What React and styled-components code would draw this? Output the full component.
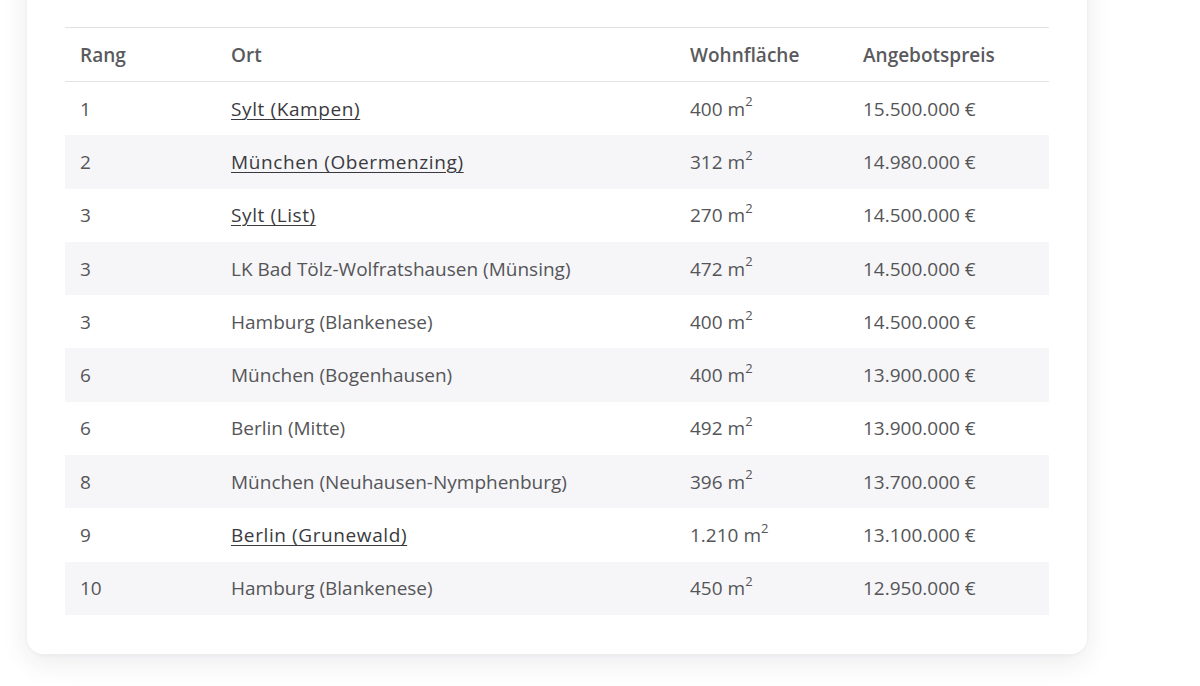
import React from "react";
import styled, { createGlobalStyle } from "styled-components";

const Global = createGlobalStyle`
  html, body { margin: 0; padding: 0; background: #ffffff; }
  body { font-family: "Open Sans", "Liberation Sans", sans-serif; overflow: hidden; }
`;

const Page = styled.div`
  width: 1200px;
  height: 686px;
  overflow: hidden;
  background: #ffffff;
`;

const Card = styled.section`
  margin: -40px 0 0 27px;
  width: 1060px;
  box-sizing: border-box;
  padding: 67px 38px 39px;
  background: #ffffff;
  border-radius: 16px;
  box-shadow: 0 8px 28px rgba(30, 30, 60, 0.09), 0 1px 4px rgba(30, 30, 60, 0.04);
`;

const Table = styled.table`
  width: 100%;
  border-collapse: collapse;
  font-size: 19px;
  color: #555558;
`;

const HeadRow = styled.tr`
  border-top: 1px solid #e2e2e4;
  border-bottom: 1px solid #e2e2e4;
`;

const Th = styled.th`
  text-align: left;
  font-weight: 600;
  color: #5a5a5e;
  height: 53px;
  padding: 0 15px;
  width: ${(p) => p.$w || "auto"};
`;

const Row = styled.tr`
  background: ${(p) => (p.$striped ? "#f6f6f8" : "transparent")};
`;

const Td = styled.td`
  height: 53.3px;
  padding: 0 15px;
  white-space: nowrap;
`;

const Link = styled.a`
  color: #3a3a3e;
  text-decoration: underline;
  text-underline-offset: 3px;
  text-decoration-thickness: 1px;
  letter-spacing: 0.6px;
`;

const Sup = styled.sup`
  font-size: 13px;
  line-height: 0;
  position: relative;
  top: -2px;
`;

const rows = [
  ["1", "Sylt (Kampen)", true, "400", "15.500.000 €"],
  ["2", "München (Obermenzing)", true, "312", "14.980.000 €"],
  ["3", "Sylt (List)", true, "270", "14.500.000 €"],
  ["3", "LK Bad Tölz-Wolfratshausen (Münsing)", false, "472", "14.500.000 €"],
  ["3", "Hamburg (Blankenese)", false, "400", "14.500.000 €"],
  ["6", "München (Bogenhausen)", false, "400", "13.900.000 €"],
  ["6", "Berlin (Mitte)", false, "492", "13.900.000 €"],
  ["8", "München (Neuhausen-Nymphenburg)", false, "396", "13.700.000 €"],
  ["9", "Berlin (Grunewald)", true, "1.210", "13.100.000 €"],
  ["10", "Hamburg (Blankenese)", false, "450", "12.950.000 €"],
];

export default function App() {
  return (
    <Page>
      <Global />
      <Card>
        <Table>
          <thead>
            <HeadRow>
              <Th $w="121px">Rang</Th>
              <Th $w="429px">Ort</Th>
              <Th $w="143px">Wohnfläche</Th>
              <Th>Angebotspreis</Th>
            </HeadRow>
          </thead>
          <tbody>
            {rows.map(([rank, ort, link, area, price], i) => (
              <Row key={i} $striped={i % 2 === 1}>
                <Td>{rank}</Td>
                <Td>{link ? <Link href="#">{ort}</Link> : ort}</Td>
                <Td>
                  {area} m<Sup>2</Sup>
                </Td>
                <Td>{price}</Td>
              </Row>
            ))}
          </tbody>
        </Table>
      </Card>
    </Page>
  );
}
